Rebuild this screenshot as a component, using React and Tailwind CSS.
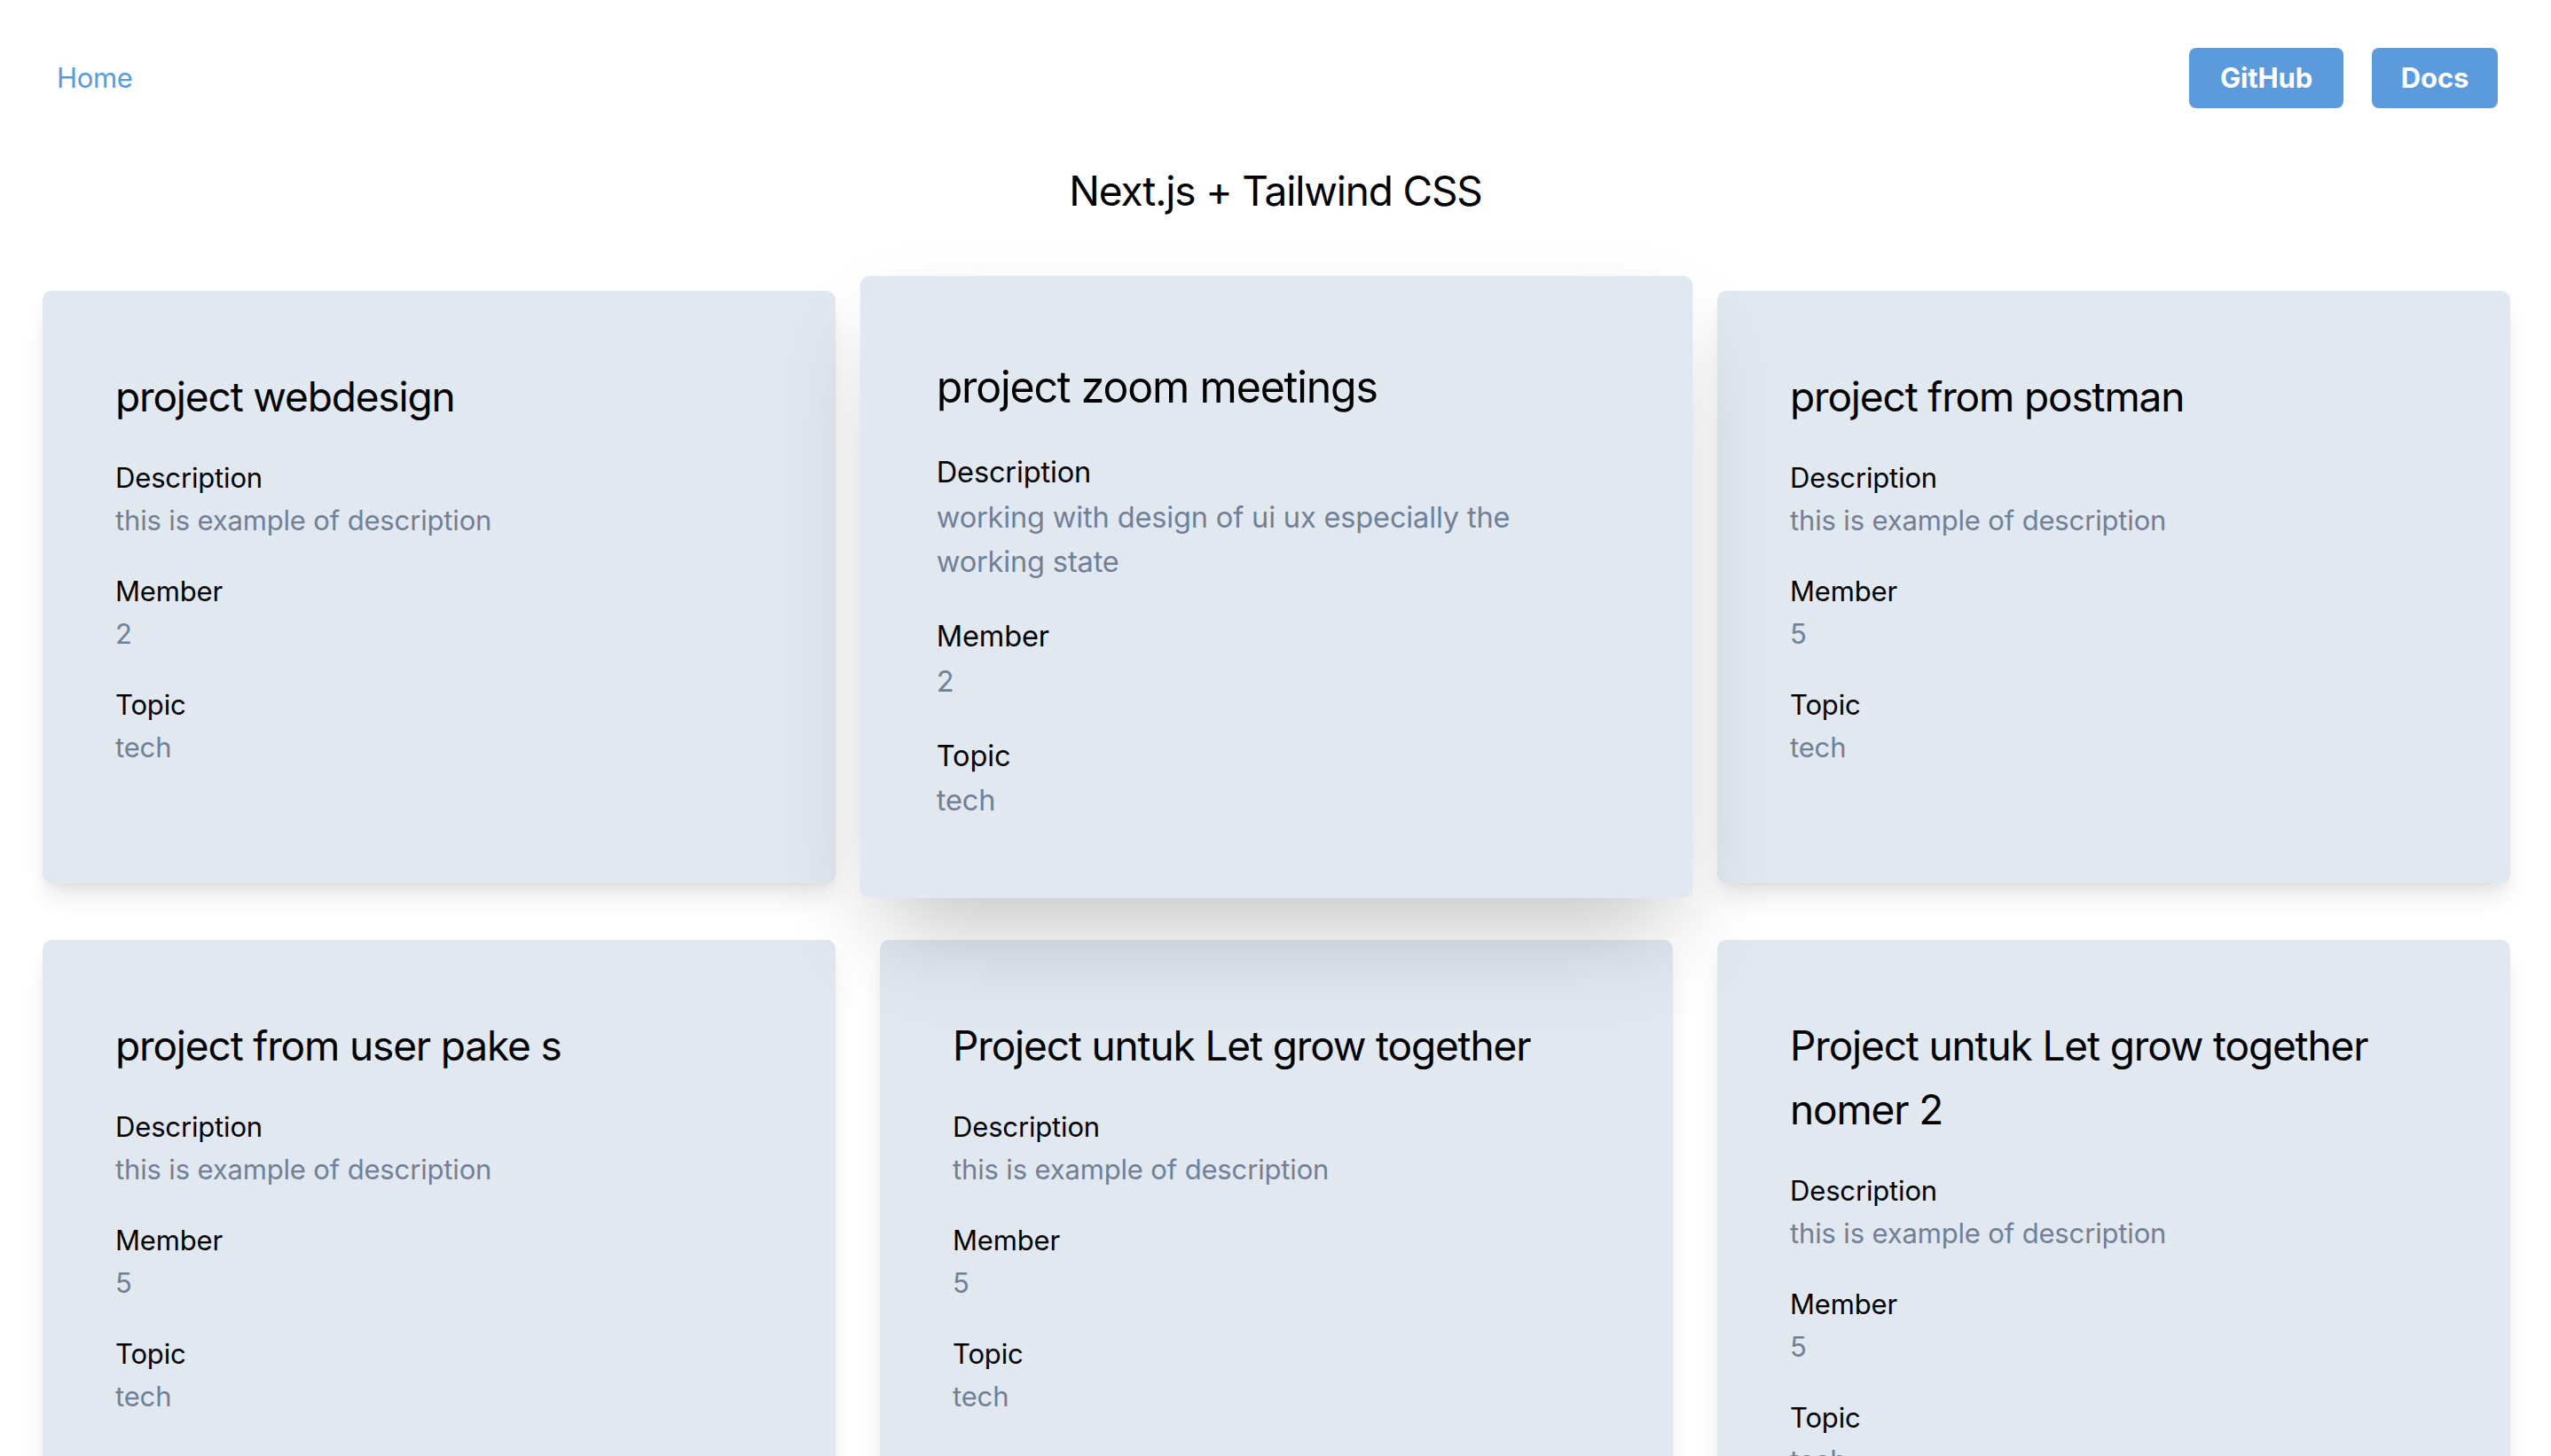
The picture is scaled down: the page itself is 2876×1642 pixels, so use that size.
import React from "react";

const rowOne = [
  { title: "project webdesign", desc: ["this is example of description"], member: "2", topic: "tech" },
  { title: "project zoom meetings", desc: ["working with design of ui ux especially the", "working state"], member: "2", topic: "tech", hover: true },
  { title: "project from postman", desc: ["this is example of description"], member: "5", topic: "tech" },
];

const rowTwo = [
  { title: "project from user pake s", desc: ["this is example of description"], member: "5", topic: "tech" },
  { title: "Project untuk Let grow together", desc: ["this is example of description"], member: "5", topic: "tech" },
  { title: "Project untuk Let grow together nomer 2", desc: ["this is example of description"], member: "5", topic: "tech" },
];

function Field({ label, children, last }) {
  return (
    <div className={last ? "" : "mb-[32px]"}>
      <div className="text-[31px] leading-[48px] tracking-[-0.005em] text-black">{label}</div>
      <div className="text-[31px] leading-[48px] tracking-[-0.005em] text-[#718096]">{children}</div>
    </div>
  );
}

function Card({ p }) {
  return (
    <div
      className={
        "rounded-[10px] bg-[#e2e8f0] pl-[82px] pr-[78px] pt-[83px] pb-[81px] " +
        (p.hover
          ? "relative z-10 scale-[1.05] shadow-[0_50px_100px_-24px_rgba(0,0,0,0.25)]"
          : "shadow-[0_20px_30px_-6px_rgba(0,0,0,0.1),0_8px_12px_-4px_rgba(0,0,0,0.05)]")
      }
    >
      <h2 className="mb-[32px] text-[46px] leading-[72px] tracking-[-0.025em] text-black">{p.title}</h2>
      <Field label="Description">
        {p.desc.map((d, i) => (
          <React.Fragment key={i}>
            {i > 0 && <br />}
            {d}
          </React.Fragment>
        ))}
      </Field>
      <Field label="Member">{p.member}</Field>
      <Field label="Topic" last>
        {p.topic}
      </Field>
    </div>
  );
}

export default function App() {
  return (
    <div
      className="h-[1642px] w-full overflow-hidden bg-white text-black"
      style={{ fontFamily: 'Inter, "Noto Sans", Arial, sans-serif' }}
    >
      <nav className="flex items-center justify-between pl-[64px] pr-[60px] pt-[54px]">
        <a className="text-[31px] leading-[48px] tracking-[-0.01em] text-[#5b9bdb]">Home</a>
        <div className="flex items-center gap-[32px]">
          <button className="flex h-[68px] w-[174px] items-center justify-center rounded-[8px] bg-[#5b9adb] text-[31px] font-bold tracking-[-0.005em] text-white">
            GitHub
          </button>
          <button className="flex h-[68px] w-[142px] items-center justify-center rounded-[8px] bg-[#5b9adb] text-[31px] font-bold tracking-[-0.005em] text-white">
            Docs
          </button>
        </div>
      </nav>
      <h1 className="mt-[57px] text-center text-[46px] leading-[72px] tracking-[-0.025em] text-black">
        Next.js + Tailwind CSS
      </h1>
      <div className="mt-[77px] grid grid-cols-3 gap-x-[50px] gap-y-[64px] pl-[48px] pr-[46px]">
        {rowOne.map((p, i) => (
          <Card key={"a" + i} p={p} />
        ))}
        {rowTwo.map((p, i) => (
          <Card key={"b" + i} p={p} />
        ))}
      </div>
    </div>
  );
}
